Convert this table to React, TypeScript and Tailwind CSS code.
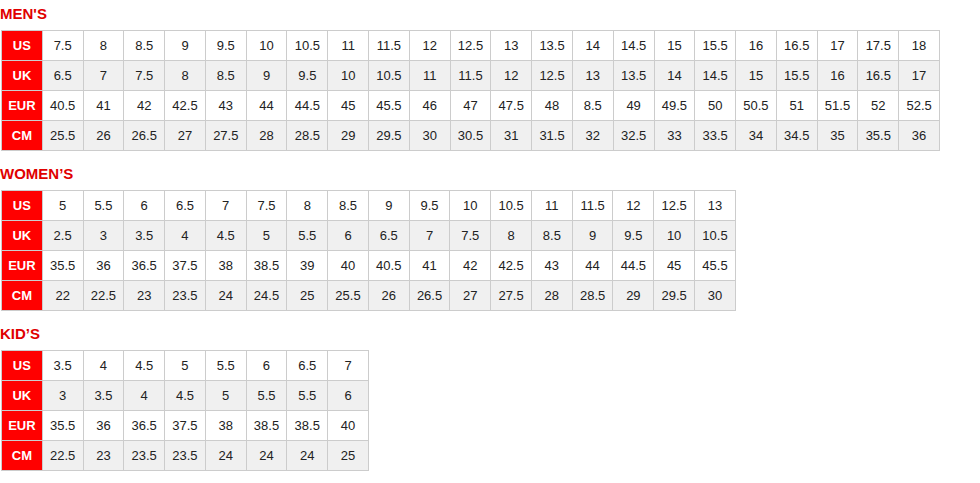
import React from "react";

type Section = { title: string; width: string; rows: [string, string[]][] };

const sections: Section[] = [
  {
    title: "MEN'S",
    width: "w-[939px]",
    rows: [
      ["US", ["7.5","8","8.5","9","9.5","10","10.5","11","11.5","12","12.5","13","13.5","14","14.5","15","15.5","16","16.5","17","17.5","18"]],
      ["UK", ["6.5","7","7.5","8","8.5","9","9.5","10","10.5","11","11.5","12","12.5","13","13.5","14","14.5","15","15.5","16","16.5","17"]],
      ["EUR", ["40.5","41","42","42.5","43","44","44.5","45","45.5","46","47","47.5","48","8.5","49","49.5","50","50.5","51","51.5","52","52.5"]],
      ["CM", ["25.5","26","26.5","27","27.5","28","28.5","29","29.5","30","30.5","31","31.5","32","32.5","33","33.5","34","34.5","35","35.5","36"]],
    ],
  },
  {
    title: "WOMEN\u2019S",
    width: "w-[735px]",
    rows: [
      ["US", ["5","5.5","6","6.5","7","7.5","8","8.5","9","9.5","10","10.5","11","11.5","12","12.5","13"]],
      ["UK", ["2.5","3","3.5","4","4.5","5","5.5","6","6.5","7","7.5","8","8.5","9","9.5","10","10.5"]],
      ["EUR", ["35.5","36","36.5","37.5","38","38.5","39","40","40.5","41","42","42.5","43","44","44.5","45","45.5"]],
      ["CM", ["22","22.5","23","23.5","24","24.5","25","25.5","26","26.5","27","27.5","28","28.5","29","29.5","30"]],
    ],
  },
  {
    title: "KID\u2019S",
    width: "w-[368px]",
    rows: [
      ["US", ["3.5","4","4.5","5","5.5","6","6.5","7"]],
      ["UK", ["3","3.5","4","4.5","5","5.5","5.5","6"]],
      ["EUR", ["35.5","36","36.5","37.5","38","38.5","38.5","40"]],
      ["CM", ["22.5","23","23.5","23.5","24","24","24","25"]],
    ],
  },
];

export default function App() {
  return (
    <div className="w-[980px] h-[483px] bg-white pt-[5px] font-['Liberation_Sans',Arial,sans-serif] overflow-hidden">
      {sections.map((s, si) => (
        <div key={si} className={si > 0 ? "mt-[14px]" : ""}>
          <h2 className="text-[15px] leading-[17px] font-bold text-[#e00000]">{s.title}</h2>
          <table className={`mt-[8px] ml-px border-collapse table-fixed ${s.width}`}>
            <tbody>
              {s.rows.map(([label, vals], ri) => (
                <tr key={ri} className={ri % 2 === 1 ? "bg-[#f0f0f0]" : "bg-white"}>
                  <td className="h-[30px] p-0 border border-[#cccccc] bg-[#ff0000] text-white font-bold text-[13px] text-center align-middle">
                    {label}
                  </td>
                  {vals.map((v, vi) => (
                    <td key={vi} className="h-[30px] p-0 border border-[#cccccc] text-[13px] text-[#222222] text-center align-middle">
                      {v}
                    </td>
                  ))}
                </tr>
              ))}
            </tbody>
          </table>
        </div>
      ))}
    </div>
  );
}
